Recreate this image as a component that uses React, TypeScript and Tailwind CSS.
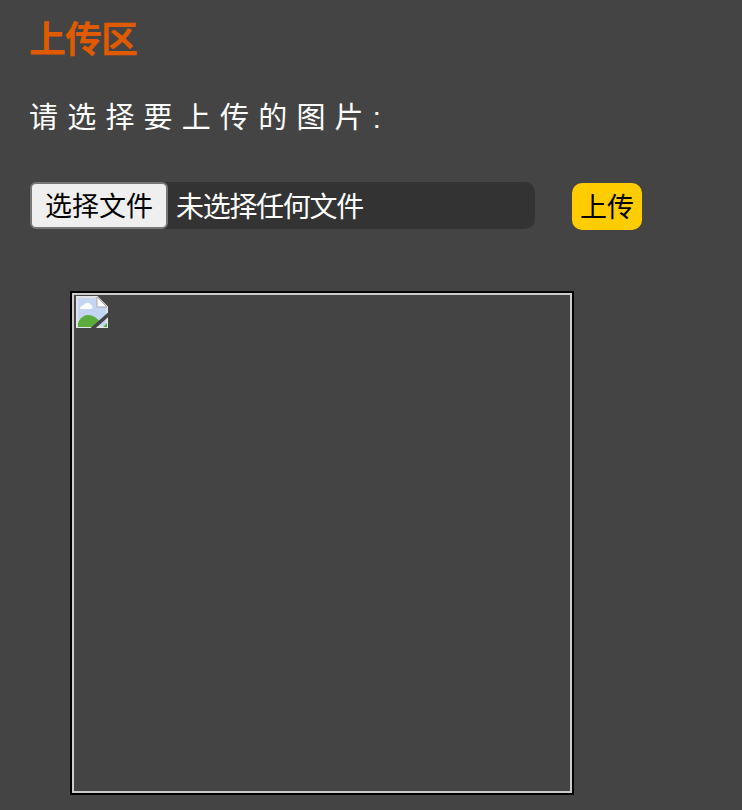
export default function App() {
  return (
    <div className="h-[810px] w-[742px] overflow-hidden bg-[#444444] pl-[30px] pt-[19px] font-['Liberation_Sans','Noto_Sans_CJK_SC',sans-serif]">
      <h1 className="ml-[-1px] text-[37px] font-bold leading-[44px] tracking-[-1px] text-[#e05a00]">上传区</h1>

      <p className="ml-[-1px] mt-[33px] text-[29px] leading-[44px] tracking-[9.2px] text-white">请选择要上传的图片:</p>

      <div className="mt-[42px] flex items-start">
        <div className="flex h-[47px] w-[505px] items-center rounded-[10px] bg-[#333333]">
          <button
            type="button"
            className="h-[47px] w-[138px] rounded-[6px] border-2 border-[#767676] bg-[#efefef] pt-[4px] text-center text-[27px] leading-none text-black"
          >
            选择文件
          </button>
          <span className="ml-[8px] pt-[5px] text-[28px] leading-none tracking-[-1.3px] text-white">未选择任何文件</span>
        </div>
        <button
          type="button"
          className="ml-[37px] mt-px h-[47px] w-[70px] rounded-[10px] bg-[#ffcc00] pt-[4px] text-center text-[27px] leading-none text-black"
        >
          上传
        </button>
      </div>

      <div className="ml-[40px] mt-[61px] h-[504px] w-[504px] border-2 border-black">
        <div className="h-full w-full border-2 border-[#cccccc] pl-[2px] pt-[1px]">
          <svg width="32" height="32" viewBox="0 0 16 16" className="block">
            <path d="M0.5 0.5H10.5L15.5 5.5V15.5H0.5Z" fill="#c3d5f3" stroke="#e4e4e4" strokeWidth="1" />
            <path d="M10.5 0.5V5.5H15.5Z" fill="#ffffff" stroke="#a8a8a8" strokeWidth="0.5" />
            <path d="M2 6.5C2 5 3.5 4.5 4 4.5C4.5 3 7 3 7.5 4.5C8.5 4.6 8.5 6.5 7.5 6.5Z" fill="#ffffff" />
            <path d="M1 15.5V13.5C2 11 4 9.5 6 9.5C8.5 9.5 10.5 11 12 13L9 15.5Z" fill="#5aad3a" />
            <path d="M13.5 15.5L15.5 13.5V15.5Z" fill="#5aad3a" />
            <path d="M8 16.5L16.5 9" stroke="#444444" strokeWidth="1.8" />
          </svg>
        </div>
      </div>
    </div>
  );
}
